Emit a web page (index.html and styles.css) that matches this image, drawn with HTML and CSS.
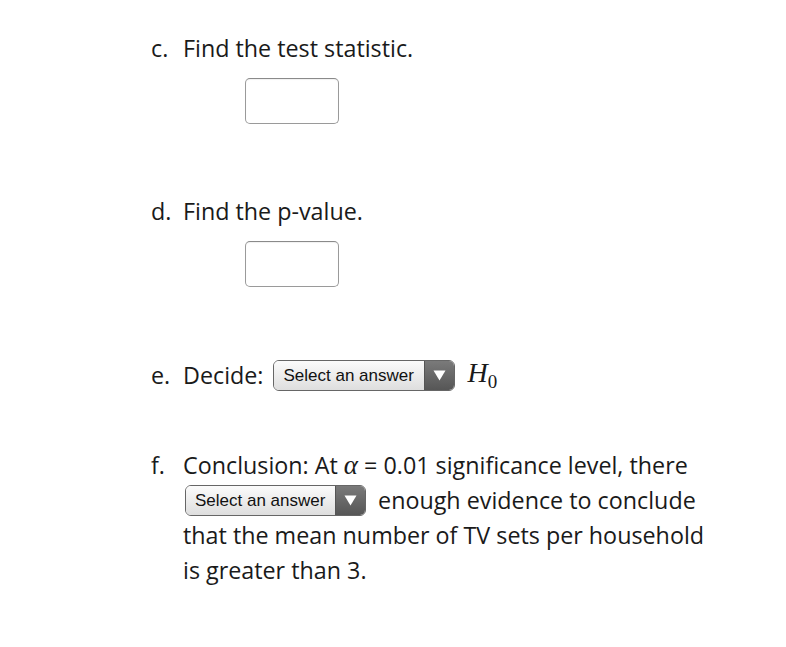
FILE: index.html
```html
<!DOCTYPE html>
<html>
<head>
<meta charset="utf-8">
<link rel="stylesheet" href="styles.css">
</head>
<body>
<div class="page">
  <div class="q q-c">
    <span class="lbl">c.</span>
    <div class="body">
      <div class="line">Find the test statistic.</div>
      <div class="box"></div>
    </div>
  </div>
  <div class="q q-d">
    <span class="lbl">d.</span>
    <div class="body">
      <div class="line">Find the p-value.</div>
      <div class="box"></div>
    </div>
  </div>
  <div class="q q-e">
    <span class="lbl">e.</span>
    <div class="body">
      <div class="line row">Decide:<span class="sel sel-e"><span class="sel-text">Select an answer</span><span class="sel-arrow"><svg width="13" height="11" viewBox="0 0 13 11"><path d="M0.5 0.5 H12.5 L6.5 10.5 Z" fill="#fff"/></svg></span></span><span class="math">H<sub>0</sub></span></div>
    </div>
  </div>
  <div class="q q-f">
    <span class="lbl lbl-f">f.</span>
    <div class="body para">
      Conclusion: At <span class="alpha">α</span> = 0.01 significance level, there
      <span class="sel sel-f"><span class="sel-text">Select an answer</span><span class="sel-arrow"><svg width="13" height="11" viewBox="0 0 13 11"><path d="M0.5 0.5 H12.5 L6.5 10.5 Z" fill="#fff"/></svg></span></span> enough evidence to conclude that the mean number of TV sets per household is greater than 3.
    </div>
  </div>
</div>
</body>
</html>
```
FILE: styles.css
```css
html, body {
  margin: 0;
  padding: 0;
  background: #fff;
}
body {
  font-family: "Open Sans", "Liberation Sans", sans-serif;
  font-size: 23.3px;
  color: #1a1a1a;
}
.page {
  padding: 33px 0 0 151px;
  width: 562px;
}
.q {
  display: flex;
}
.lbl {
  width: 32px;
  flex: none;
  line-height: 30px;
}
.lbl-f {
  line-height: 35px;
}
.body {
  flex: 1;
  min-width: 0;
}
.line {
  line-height: 30px;
}
.box {
  width: 92px;
  height: 44px;
  margin: 15px 0 0 62px;
  border: 1px solid #9a9a9a;
  border-top-color: #8a8a8a;
  border-radius: 5px;
  background: #fff;
  box-shadow: inset 0 1px 1px rgba(0,0,0,0.06);
}
.q-d { margin-top: 72px; }
.q-e { margin-top: 73px; }
.q-f { margin-top: 58px; }
.row {
  display: flex;
  align-items: center;
  height: 30px;
}
.sel {
  display: inline-flex;
  align-items: stretch;
  border: 1px solid #666;
  border-radius: 6px;
  overflow: hidden;
  vertical-align: middle;
  font-family: "Liberation Sans", Arial, sans-serif;
  font-size: 17px;
  color: #111;
  box-sizing: border-box;
  line-height: 1;
}
.sel-e { width: 182px; margin-left: 10px; height: 31px; }
.sel-f { width: 181px; margin: 0 6px 0 2px; height: 31px; position: relative; top: -2px; }
.sel-text {
  flex: 1;
  display: flex;
  align-items: center;
  padding-left: 9px;
  background: linear-gradient(#fbfbfb, #dedede);
}
.sel-arrow {
  width: 29px;
  flex: none;
  display: flex;
  align-items: center;
  justify-content: center;
  background: linear-gradient(#7a7a7a, #565656);
  border-left: 1px solid #555;
}
.math {
  font-family: "Liberation Serif", serif;
  font-style: italic;
  font-size: 28px;
  margin-left: 12px;
  line-height: 1;
}
.math sub {
  font-style: normal;
  font-size: 19px;
  vertical-align: -6px;
}
.alpha {
  font-family: "Liberation Serif", serif;
  font-style: italic;
  font-size: 27px;
  line-height: 1;
}
.para {
  line-height: 35px;
}
```
